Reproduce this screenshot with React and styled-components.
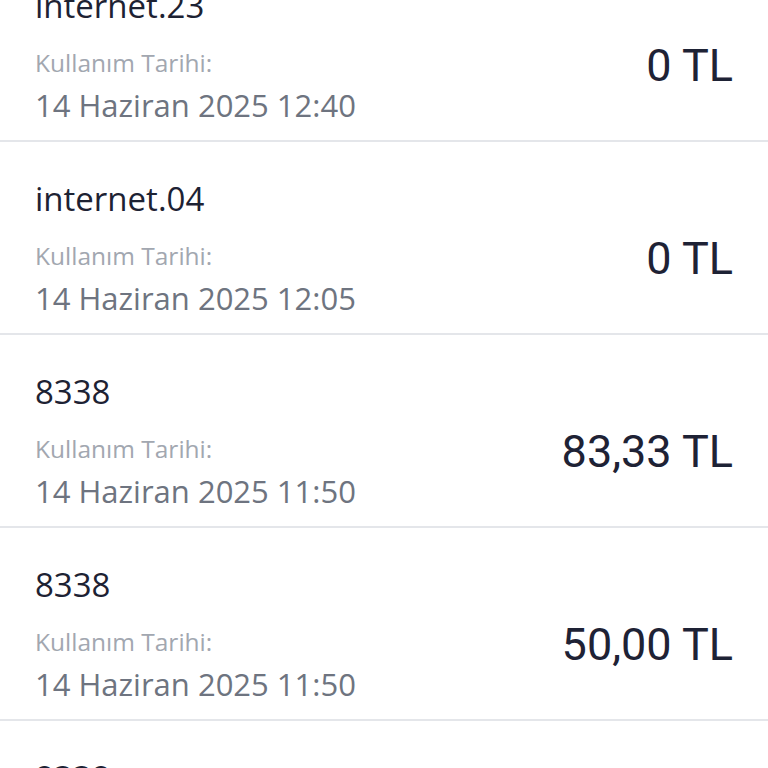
import styled, { createGlobalStyle } from "styled-components";

const GlobalStyle = createGlobalStyle`
  html, body {
    margin: 0;
    padding: 0;
    background: #ffffff;
    overflow: hidden;
  }
`;

const List = styled.div`
  display: flex;
  flex-direction: column;
  margin-top: -51px;
  font-family: 'Open Sans', 'Noto Sans', sans-serif;
`;

const Row = styled.div`
  display: flex;
  justify-content: space-between;
  align-items: center;
  height: 191px;
  padding: 0 35px;
  border-bottom: 2px solid #e4e6ea;
  box-sizing: content-box;
`;

const Info = styled.div`
  display: flex;
  flex-direction: column;
  align-self: flex-start;
  padding-top: 37px;
`;

const Title = styled.div`
  font-size: 33px;
  line-height: 40px;
  color: #1d2233;
`;

const Label = styled.div`
  margin-top: 22px;
  font-size: 24.5px;
  line-height: 30px;
  color: #a2a7b0;
`;

const DateText = styled.div`
  margin-top: 9px;
  font-size: 31px;
  line-height: 36px;
  color: #6e7480;
`;

const Amount = styled.div`
  margin-top: 42px;
  font-family: 'Roboto', 'Liberation Sans', sans-serif;
  font-size: 45px;
  line-height: 52px;
  color: #1e2235;
`;

const items = [
  { title: "internet.23", date: "14 Haziran 2025 12:40", amount: "0 TL" },
  { title: "internet.04", date: "14 Haziran 2025 12:05", amount: "0 TL" },
  { title: "8338", date: "14 Haziran 2025 11:50", amount: "83,33 TL" },
  { title: "8338", date: "14 Haziran 2025 11:50", amount: "50,00 TL" },
  { title: "8338", date: "14 Haziran 2025 11:50", amount: "50,00 TL" },
];

function UsageRow({ title, date, amount }) {
  return (
    <Row>
      <Info>
        <Title>{title}</Title>
        <Label>Kullanım Tarihi:</Label>
        <DateText>{date}</DateText>
      </Info>
      <Amount>{amount}</Amount>
    </Row>
  );
}

export default function App() {
  return (
    <>
      <GlobalStyle />
      <List>
        {items.map((item, i) => (
          <UsageRow key={i} {...item} />
        ))}
      </List>
    </>
  );
}
